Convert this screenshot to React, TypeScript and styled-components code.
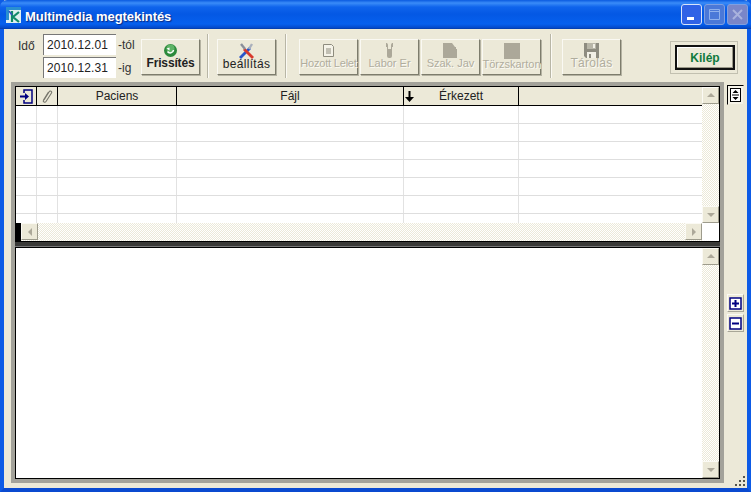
import styled, { createGlobalStyle } from "styled-components";

const Global = createGlobalStyle`
    html, body { margin: 0; padding: 0; overflow: hidden; background: #0a50d8; }
    * { box-sizing: border-box; }
`

const Window = styled.div`
    position: relative;
    width: 751px;
    height: 492px;
    display: flex;
    flex-direction: column;
    font-family: "Liberation Sans", Arial, sans-serif;
    font-size: 12px;
    color: #222;
    background: #ece9d8;
    border-left: 4px solid #0d5be6;
    border-right: 4px solid #0d5be6;
    border-bottom: 4px solid #0a4ad0;
`

const TitleBar = styled.div`
    height: 29px;
    flex: none;
    margin: 0 -4px;
    padding: 0 3px 0 6px;
    display: flex;
    align-items: center;
    background: linear-gradient(180deg, #0a5ae0 0, #3a8cf8 3px, #0f64ec 7px, #0458e4 14px, #0660ee 24px, #0448c8 28px, #03399f 29px);
    border-radius: 7px 7px 0 0;
`

const TitleText = styled.span`
    margin-left: 4px;
    padding-top: 3px;
    color: #fff;
    font-size: 13px;
    font-weight: 700;
    letter-spacing: -0.05px;
    text-shadow: 1px 1px 1px #0a2a80;
`

const WinButtons = styled.div`
    margin-left: auto;
    display: flex;
    gap: 2px;
`

const WinButton = styled.div<{ $tone: string }>`
    width: 21px;
    height: 21px;
    border: 1px solid ${p => p.$tone === "active" ? "#d8e4fa" : "#7f9fe0"};
    border-radius: 3px;
    background: ${p => p.$tone === "active" ? "#2f62e6" : p.$tone === "close" ? "#7a86c8" : "#4a78d8"};
    display: flex;
    align-items: center;
    justify-content: center;
`

const Toolbar = styled.div`
    height: 53px;
    flex: none;
    display: flex;
    align-items: flex-start;
`

const DateGroup = styled.div`
    display: grid;
    grid-template-columns: 25px 73px 23px;
    grid-auto-rows: 21px;
    row-gap: 2px;
    margin: 5px 2px 0 14px;
    align-items: center;
`

const IdoLabel = styled.span`
    font-size: 12px;
    color: #333;
    padding-top: 2px;
`

const DateInput = styled.div`
    height: 21px;
    background: #fff;
    border-top: 1px solid #777;
    border-left: 1px solid #777;
    padding: 3px 0 0 3px;
    font-size: 12px;
    letter-spacing: 0.1px;
    color: #222;
`

const Suffix = styled.span`
    padding-left: 2px;
    font-size: 12px;
    color: #333;
`

const ToolButton = styled.div<{ $disabled?: boolean; $first?: boolean }>`
    width: 59px;
    height: 36px;
    flex: none;
    margin-top: 10px;
    margin-left: ${p => (p.$first ? "0" : "2px")};
    display: flex;
    flex-direction: column;
    align-items: center;
    justify-content: flex-start;
    padding-top: 3px;
    background: #ece9d8;
    border: 1px solid;
    border-color: #faf9f3 #7d7c6c #7d7c6c #faf9f3;
    box-shadow: 1px 1px 0 #b4b2a2;
    white-space: nowrap;
    color: ${p => (p.$disabled ? "#b0ad9e" : "#222")};
    text-shadow: ${p => (p.$disabled ? "1px 1px 0 #fbfaf4" : "none")};
`

const ButtonLabel = styled.span<{ $bold?: boolean; $size?: number; $spacing?: number }>`
    margin-top: -2px;
    line-height: 14px;
    font-size: ${p => p.$size || 11}px;
    font-weight: ${p => (p.$bold ? 700 : 400)};
    letter-spacing: ${p => p.$spacing || 0}px;
`

const Divider = styled.div<{ $left: number; $right: number }>`
    width: 2px;
    height: 44px;
    flex: none;
    margin: 5px ${p => p.$right}px 0 ${p => p.$left}px;
    border-left: 1px solid #b8b6a6;
    border-right: 1px solid #fbfaf4;
`

const ExitFrame = styled.div`
    width: 68px;
    height: 33px;
    margin: 12px 0 0 49px;
    padding: 3px 2px 0 4px;
    border: 1px solid #c2c0b0;
`

const ExitButton = styled.div`
    height: 25px;
    border: 2px solid #111;
    box-shadow: inset -1px -1px 0 #9a9888, inset 1px 1px 0 #fff;
    display: flex;
    align-items: center;
    justify-content: center;
    color: #0f7a3c;
    font-weight: 700;
    font-size: 12px;
`

const Main = styled.div`
    flex: 1;
    display: flex;
    min-height: 0;
    padding: 0 0 5px 7px;
`

const Panel = styled.div`
    width: 713px;
    display: flex;
    flex-direction: column;
    background: #a3a29a;
    padding: 4px;
`

const GridFrame = styled.div`
    height: 155px;
    flex: none;
    display: grid;
    grid-template-columns: 1fr 17px;
    grid-template-rows: 1fr 18px;
    background: #fff;
    border: 1px solid #000;
    border-bottom: none;
`

const GridBody = styled.div`
    min-width: 0;
    min-height: 0;
    overflow: hidden;
`

const HeaderRow = styled.div`
    display: flex;
    height: 19px;
    background: #ece9d8;
    border-bottom: 1px solid #000;
`

const HeadCell = styled.div<{ $w: number; $last?: boolean }>`
    position: relative;
    width: ${p => p.$w}px;
    flex: none;
    display: flex;
    align-items: center;
    justify-content: center;
    border-right: ${p => (p.$last ? "none" : "1px solid #000")};
    color: #222;
    font-size: 12px;
`

const SortArrow = styled.svg`
    position: absolute;
    left: 0;
    top: 3px;
`

const DataRow = styled.div`
    display: flex;
    height: 18px;
    border-bottom: 1px solid #dedede;
`

const DataCell = styled.div<{ $w: number; $last?: boolean }>`
    width: ${p => p.$w}px;
    flex: none;
    border-right: ${p => (p.$last ? "none" : "1px solid #e2e2e2")};
`

const VTrack = styled.div`
    display: flex;
    flex-direction: column;
    justify-content: space-between;
    background-color: #fff;
    background-image: conic-gradient(#ece9d8 25%, #fff 0 50%, #ece9d8 0 75%, #fff 0);
    background-size: 2px 2px;
`

const HTrack = styled.div`
    display: flex;
    justify-content: space-between;
    background-color: #fff;
    background-image: conic-gradient(#ece9d8 25%, #fff 0 50%, #ece9d8 0 75%, #fff 0);
    background-size: 2px 2px;
    border-left: 5px solid #000;
`

const ScrollButton = styled.div`
    width: 17px;
    height: 17px;
    flex: none;
    display: flex;
    align-items: center;
    justify-content: center;
    background: #ece9d8;
    border: 1px solid;
    border-color: #fbfaf4 #9d9b8c #9d9b8c #fbfaf4;
`

const Corner = styled.div`
    background: #fff;
`

const Splitter = styled.div`
    height: 6px;
    flex: none;
    background: #3a3a38;
    border-top: 1px solid #000;
    border-bottom: 1px solid #777;
`

const Memo = styled.div`
    flex: 1;
    min-height: 0;
    display: grid;
    grid-template-columns: 1fr 17px;
    background: #fff;
    border: 1px solid #000;
`

const Rail = styled.div`
    width: 23px;
    flex: none;
    display: flex;
    flex-direction: column;
    padding: 3px 0 0 3px;
`

const RailButton = styled.div<{ $gap?: number }>`
    width: 17px;
    height: 18px;
    margin-top: ${p => p.$gap || 0}px;
    display: flex;
    align-items: center;
    justify-content: center;
    border: 1px solid;
    border-color: #fbfaf4 #a8a697 #a8a697 #fbfaf4;
`

const ToggleButton = styled(RailButton)`
    height: 20px;
    border-color: #000 #ece9d8 #ece9d8 #000;
    background: #f5f3e8;
`

const Grip = styled.svg`
    position: absolute;
    right: 0;
    bottom: 0;
`

const columns = [21, 21, 119, 227, 115, 183]

const Tri = ({ dir }: { dir: "up" | "down" | "left" | "right" }) => {
    const pts = {
        up: "1,6 5,2 9,6",
        down: "1,3 9,3 5,7",
        left: "7,1 7,9 3,5",
        right: "3,1 3,9 7,5",
    }[dir]
    return <svg width="10" height="10"><polygon points={pts} fill="#aca899" /></svg>
}

const Ico = styled.svg`
    flex: none;
    display: block;
`

export default function App() {
    return (
        <Window>
            <Global />
            <TitleBar>
                <Ico width="15" height="16" viewBox="0 0 15 16">
                    <rect width="15" height="16" fill="#dff0f0" />
                    <path d="M0 0h15v3H3v10H0z" fill="#2a8fd0" />
                    <path d="M6 4v11M13 5 7 10l6 5" stroke="#128a6a" strokeWidth="2.2" fill="none" />
                    <path d="M3 4l3 4" stroke="#3050c0" strokeWidth="1.5" />
                </Ico>
                <TitleText>Multimédia megtekintés</TitleText>
                <WinButtons>
                    <WinButton $tone="active">
                        <svg width="13" height="13"><rect x="2" y="9" width="7" height="3" fill="#fff" /></svg>
                    </WinButton>
                    <WinButton $tone="max">
                        <svg width="13" height="13"><path d="M1.5 1.5h10v10h-10zM1.5 3.5h10" stroke="#8fb0ec" strokeWidth="1" fill="none" /></svg>
                    </WinButton>
                    <WinButton $tone="close">
                        <svg width="13" height="13"><path d="M2 2l9 9M11 2l-9 9" stroke="#a9b2dd" strokeWidth="2" /></svg>
                    </WinButton>
                </WinButtons>
            </TitleBar>

            <Toolbar>
                <DateGroup>
                    <IdoLabel>Idő</IdoLabel>
                    <DateInput>2010.12.01</DateInput>
                    <Suffix>-tól</Suffix>
                    <span />
                    <DateInput>2010.12.31</DateInput>
                    <Suffix>-ig</Suffix>
                </DateGroup>
                <ToolButton $first>
                    <Ico width="15" height="15" viewBox="0 0 15 15">
                        <circle cx="7.5" cy="7.5" r="6.5" fill="#2c8a3c" />
                        <circle cx="7.5" cy="5.5" r="4" fill="#8fdc8f" opacity="0.5" />
                        <path d="M4.5 8.5a3.3 3.3 0 0 0 6-1.5" stroke="#fff" strokeWidth="1.6" fill="none" />
                        <path d="M3.5 5.5l3-1v3z" fill="#fff" />
                    </Ico>
                    <ButtonLabel $bold $size={12} $spacing={-0.15}>Frissítés</ButtonLabel>
                </ToolButton>
                <Divider $left={7} $right={8} />
                <ToolButton $first>
                    <Ico width="17" height="16" viewBox="0 0 17 16">
                        <path d="M2 15 12 5" stroke="#2a56c8" strokeWidth="2.8" />
                        <path d="M15 15 6 6" stroke="#d8392c" strokeWidth="2.8" />
                        <path d="M3 1 7 6" stroke="#8a8f9a" strokeWidth="2.4" />
                        <path d="M14 1 11 6" stroke="#aab0bc" strokeWidth="2.4" />
                    </Ico>
                    <ButtonLabel $size={12} $spacing={0.3}>beállítás</ButtonLabel>
                </ToolButton>
                <Divider $left={9} $right={12} />
                <ToolButton $first $disabled>
                    <Ico width="15" height="15" viewBox="0 0 15 15">
                        <path d="M2.500 1.500h8l2 2v10h-10z" fill="#f5f3e8" stroke="#8e8c7e" />
                        <path d="M5 6h5M5 8h5M5 10h5" stroke="#8e8c7e" />
                    </Ico>
                    <ButtonLabel $spacing={-0.2}>Hozott Lelet</ButtonLabel>
                </ToolButton>
                <ToolButton $disabled>
                    <Ico width="15" height="15" viewBox="0 0 15 15">
                        <path d="M4.500 0v4M10.500 0v4" stroke="#aca899" />
                        <rect x="5" y="0" width="5" height="15" rx="2" fill="#aca899" />
                        <rect x="6" y="0" width="3" height="6" fill="#ece9d8" />
                    </Ico>
                    <ButtonLabel>Labor Er</ButtonLabel>
                </ToolButton>
                <ToolButton $disabled>
                    <Ico width="15" height="15" viewBox="0 0 15 15">
                        <path d="M0 0h9l3 4h1v2h1v9H0z" fill="#aca899" />
                    </Ico>
                    <ButtonLabel>Szak. Jav</ButtonLabel>
                </ToolButton>
                <ToolButton $disabled>
                    <Ico width="16" height="16" viewBox="0 0 16 16">
                        <rect width="16" height="16" fill="#aca899" />
                    </Ico>
                    <ButtonLabel>Törzskarton</ButtonLabel>
                </ToolButton>
                <Divider $left={9} $right={10} />
                <ToolButton $first $disabled>
                    <Ico width="15" height="15" viewBox="0 0 15 15">
                        <path d="M0 0h15v15H2l-2-2z" fill="#8e8c80" />
                        <rect x="3" y="0" width="9" height="6" fill="#b8b6a8" />
                        <rect x="9" y="1" width="2" height="4" fill="#f2f0e6" />
                        <rect x="3" y="9" width="9" height="6" fill="#f2f0e6" />
                        <rect x="5" y="11" width="2" height="4" fill="#8e8c80" />
                    </Ico>
                    <ButtonLabel $size={12} $spacing={0.3}>Tárolás</ButtonLabel>
                </ToolButton>
                <ExitFrame>
                    <ExitButton>Kilép</ExitButton>
                </ExitFrame>
            </Toolbar>

            <Main>
                <Panel>
                    <GridFrame>
                        <GridBody>
                            <HeaderRow>
                                <HeadCell $w={columns[0]}>
                                    <svg width="15" height="15" viewBox="0 0 15 15">
                                        <path d="M5 4V1h8v13H5v-3" stroke="#000080" strokeWidth="1.5" fill="none" />
                                        <path d="M1 6.500h5V4l4 3.500L6 11V8.500H1z" fill="#000080" />
                                    </svg>
                                </HeadCell>
                                <HeadCell $w={columns[1]}>
                                    <svg width="13" height="15" viewBox="0 0 13 15">
                                        <path d="M3 11 8 3c1-2 3.500-.5 2.500 1L5 12.500c-1 1.500-3.500.5-2.500-1.500l5-8" stroke="#77766c" strokeWidth="1.1" fill="none" />
                                    </svg>
                                </HeadCell>
                                <HeadCell $w={columns[2]}>Paciens</HeadCell>
                                <HeadCell $w={columns[3]}>Fájl</HeadCell>
                                <HeadCell $w={columns[4]}>
                                    <SortArrow width="11" height="13" viewBox="0 0 11 13">
                                        <path d="M5.500 1v9" stroke="#000" strokeWidth="2" />
                                        <path d="M1 7l4.500 5L10 7z" fill="#000" />
                                    </SortArrow>
                                    Érkezett
                                </HeadCell>
                                <HeadCell $w={columns[5]} $last />
                            </HeaderRow>
                            {[0, 1, 2, 3, 4, 5, 6].map(r => (
                                <DataRow key={r}>
                                    {columns.map((w, i) => (
                                        <DataCell key={i} $w={w} $last={i === 5} />
                                    ))}
                                </DataRow>
                            ))}
                        </GridBody>
                        <VTrack>
                            <ScrollButton><Tri dir="up" /></ScrollButton>
                            <ScrollButton><Tri dir="down" /></ScrollButton>
                        </VTrack>
                        <HTrack>
                            <ScrollButton><Tri dir="left" /></ScrollButton>
                            <ScrollButton><Tri dir="right" /></ScrollButton>
                        </HTrack>
                        <Corner />
                    </GridFrame>
                    <Splitter />
                    <Memo>
                        <div />
                        <VTrack>
                            <ScrollButton><Tri dir="up" /></ScrollButton>
                            <ScrollButton><Tri dir="down" /></ScrollButton>
                        </VTrack>
                    </Memo>
                </Panel>
                <Rail>
                    <ToggleButton>
                        <svg width="11" height="14" viewBox="0 0 11 14">
                            <rect x="0.500" y="0.500" width="10" height="13" fill="#fff" stroke="#000" />
                            <path d="M2.500 5 5.500 2l3 3zM2.500 9l3 3 3-3z" fill="#000" />
                            <path d="M2 7h7" stroke="#000" />
                        </svg>
                    </ToggleButton>
                    <RailButton $gap={189}>
                        <svg width="13" height="13" viewBox="0 0 13 13">
                            <rect x="1" y="1" width="11" height="11" fill="#fff" stroke="#000080" strokeWidth="1.5" />
                            <path d="M3 6.500h7M6.500 3v7" stroke="#000080" strokeWidth="2" />
                        </svg>
                    </RailButton>
                    <RailButton $gap={2}>
                        <svg width="13" height="13" viewBox="0 0 13 13">
                            <rect x="1" y="1" width="11" height="11" fill="#fff" stroke="#000080" strokeWidth="1.5" />
                            <path d="M3 6.500h7" stroke="#000080" strokeWidth="2" />
                        </svg>
                    </RailButton>
                </Rail>
            </Main>
            <Grip width="13" height="13" viewBox="0 0 13 13">
                <path d="M9 1h2v2H9zM5 5h2v2H5zM9 5h2v2H9zM1 9h2v2H1zM5 9h2v2H5zM9 9h2v2H9z" fill="#55544c" />
            </Grip>
        </Window>
    )
}
